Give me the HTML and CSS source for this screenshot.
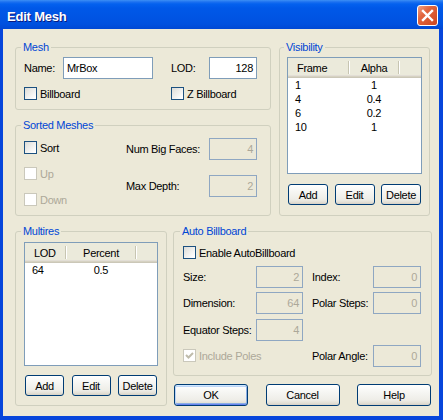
FILE: index.html
```
<!DOCTYPE html>
<html>
<head>
<meta charset="utf-8">
<title>Edit Mesh</title>
<link rel="stylesheet" href="styles.css">
</head>
<body>
<div class="window">
  <div class="titlebar">
    <span class="title">Edit Mesh</span>
    <span class="close"><svg width="19" height="19" viewBox="0 0 19 19"><path d="M5 5 L14 14 M14 5 L5 14" stroke="#fff" stroke-width="2.4" stroke-linecap="square" fill="none"/></svg></span>
  </div>
  <div class="client">
    <div class="row row1">
      <div class="col-left">
        <section class="group mesh">
          <div class="group-title">Mesh</div>
          <div class="mesh-grid">
            <span>Name:</span>
            <div class="edit">MrBox</div>
            <span></span>
            <span>LOD:</span>
            <div class="edit num">128</div>
            <div class="check span-a"><span class="box"></span>Billboard</div>
            <div class="check span-b"><span class="box"></span>Z Billboard</div>
          </div>
        </section>
        <section class="group sorted">
          <div class="group-title">Sorted Meshes</div>
          <div class="sorted-body">
            <div class="sorted-checks">
              <div class="check"><span class="box"></span>Sort</div>
              <div class="check disabled"><span class="box"></span>Up</div>
              <div class="check disabled"><span class="box"></span>Down</div>
            </div>
            <div class="sorted-fields">
              <span>Num Big Faces:</span>
              <div class="edit num disabled">4</div>
              <span>Max Depth:</span>
              <div class="edit num disabled">2</div>
            </div>
          </div>
        </section>
      </div>
      <section class="group visibility">
        <div class="group-title">Visibility</div>
        <div class="list vis-list">
          <div class="list-head">
            <div class="hcell w-frame">Frame</div>
            <div class="hcell w-alpha center">Alpha</div>
          </div>
          <div class="list-row"><div class="cell w-frame first">1</div><div class="cell w-alpha center">1</div></div>
          <div class="list-row"><div class="cell w-frame first">4</div><div class="cell w-alpha center">0.4</div></div>
          <div class="list-row"><div class="cell w-frame first">6</div><div class="cell w-alpha center">0.2</div></div>
          <div class="list-row"><div class="cell w-frame first">10</div><div class="cell w-alpha center">1</div></div>
        </div>
        <div class="list-btns">
          <button class="btn small">Add</button>
          <button class="btn small">Edit</button>
          <button class="btn small">Delete</button>
        </div>
      </section>
    </div>
    <div class="row row2">
      <section class="group multires">
        <div class="group-title">Multires</div>
        <div class="list mr-list">
          <div class="list-head">
            <div class="hcell w-lod">LOD</div>
            <div class="hcell w-pct center">Percent</div>
          </div>
          <div class="list-row"><div class="cell w-lod first">64</div><div class="cell w-pct center">0.5</div></div>
        </div>
        <div class="list-btns">
          <button class="btn small">Add</button>
          <button class="btn small">Edit</button>
          <button class="btn small">Delete</button>
        </div>
      </section>
      <div class="col-right">
        <section class="group auto">
          <div class="group-title">Auto Billboard</div>
          <div class="check enable"><span class="box"></span>Enable AutoBillboard</div>
          <div class="auto-grid">
            <span>Size:</span>
            <div class="edit num disabled">2</div>
            <span></span>
            <span>Index:</span>
            <div class="edit num disabled">0</div>

            <span>Dimension:</span>
            <div class="edit num disabled">64</div>
            <span></span>
            <span>Polar Steps:</span>
            <div class="edit num disabled">0</div>

            <span>Equator Steps:</span>
            <div class="edit num disabled">4</div>
            <span></span>
            <span></span>
            <span></span>

            <div class="check disabled span-poles"><span class="box"><svg width="11" height="11" viewBox="0 0 11 11"><path d="M2 5 L4.5 7.5 L9 3" stroke="#BFBCAB" stroke-width="2" fill="none"/></svg></span>Include Poles</div>
            <span></span>
            <span>Polar Angle:</span>
            <div class="edit num disabled">0</div>
          </div>
        </section>
        <div class="dlg-buttons">
          <button class="btn dlg default">OK</button>
          <button class="btn dlg">Cancel</button>
          <button class="btn dlg">Help</button>
        </div>
      </div>
    </div>
  </div>
</div>
</body>
</html>
```
FILE: styles.css
```
* { box-sizing: border-box; }

body {
  margin: 0;
  background: #ffffff;
  font-family: "Liberation Sans", Arial, sans-serif;
  font-size: 11px;
  letter-spacing: -0.3px;
  color: #000;
}

.window {
  width: 443px;
  height: 420px;
  display: flex;
  flex-direction: column;
  background: #0746DB;
}

.titlebar {
  height: 29px;
  flex: none;
  display: flex;
  justify-content: space-between;
  align-items: flex-start;
  padding: 0 5px 0 7px;
  background: linear-gradient(to bottom, #3D8FF5 0px, #1C70F0 2px, #0461EE 4px, #0058E8 8px, #0055E4 16px, #0051DF 24px, #0048D4 29px);
}

.title {
  margin-top: 10px;
  font-size: 13px;
  line-height: 13px;
  font-weight: bold;
  letter-spacing: -0.2px;
  color: #fff;
  text-shadow: 1px 1px 0 #0A1A7E;
}

.close {
  width: 21px;
  height: 21px;
  margin-top: 5px;
  border: 1px solid #fff;
  border-radius: 3px;
  background: linear-gradient(135deg, #F0A286 0%, #E2663F 35%, #CC4620 100%);
  display: flex;
}

.client {
  flex: 1;
  margin: 0 4px 4px 3px;
  background: #ECE9D8;
  padding: 18px 0 0 12px;
}

.row { display: flex; }
.row1 { gap: 8px; height: 169px; }
.row2 { gap: 6px; margin-top: 15px; align-items: flex-start; }

.col-left {
  width: 256px;
  display: flex;
  flex-direction: column;
  gap: 15px;
}
.col-right {
  width: 259px;
  display: flex;
  flex-direction: column;
}

.group {
  border: 1px solid #D0D0BF;
  border-radius: 3px;
}

.group-title {
  width: max-content;
  height: 13px;
  line-height: 13px;
  margin: -7px 0 0 -3px;
  padding: 0 2px;
  background: #ECE9D8;
  color: #0046D5;
}

/* Mesh */
.mesh { height: 63px; padding-left: 8px; }
.mesh-grid {
  display: grid;
  grid-template-columns: 39px 90px 18px 38px 48px;
  grid-template-rows: 22px 13px;
  row-gap: 8px;
  align-items: center;
  margin-top: 3px;
}
.span-a { grid-column: 1 / 4; }
.span-b { grid-column: 4 / 6; }

/* Sorted */
.sorted { height: 91px; padding-left: 8px; }
.sorted-body { display: flex; }
.sorted-checks {
  width: 102px;
  display: flex;
  flex-direction: column;
  gap: 13px;
  margin-top: 9px;
}
.sorted-fields {
  display: grid;
  grid-template-columns: 83px 48px;
  grid-auto-rows: 22px;
  row-gap: 15px;
  align-items: center;
  margin-top: 6px;
}

/* Edits */
.edit {
  height: 22px;
  border: 1px solid #7F9DB9;
  background: #fff;
  padding: 0 3px;
  line-height: 20px;
  white-space: nowrap;
}
.edit.num { text-align: right; }
.edit.disabled {
  background: #ECE9D8;
  color: #ACA899;
  border-color: #8FA7C2;
}

/* Checkboxes */
.check {
  display: flex;
  align-items: center;
  gap: 3px;
  height: 13px;
  white-space: nowrap;
}
.box {
  flex: none;
  width: 13px;
  height: 13px;
  border: 1px solid #1C5180;
  background: linear-gradient(135deg, #DCDCD7 0%, #FFFFFF 90%);
  display: flex;
}
.check.disabled { color: #ACA899; }
.check.disabled .box {
  border-color: #CAC8BB;
  background: #fff;
}

/* Visibility */
.visibility { width: 151px; padding: 0 7px; }
.list {
  border: 1px solid #7F9DB9;
  background: #fff;
}
.vis-list { height: 117px; margin-top: 3px; }
.list-btns {
  display: flex;
  justify-content: space-between;
  padding: 0 1px;
  margin-top: 10px;
}
.visibility .btn.small { width: 40px; }

.list-head {
  display: flex;
  height: 20px;
  background: #EBEADB;
  box-shadow: inset 0 -1px 0 #CBC7B8, inset 0 -2px 0 #D6D2C2, inset 0 -3px 0 #E2DED6;
}
.hcell {
  position: relative;
  padding: 3px 0 0 9px;
  line-height: 14px;
}
.hcell::after {
  content: "";
  position: absolute;
  right: 0;
  top: 3px;
  width: 1px;
  height: 13px;
  background: #C7C5B2;
  box-shadow: 1px 0 0 #fff;
}
.hcell.center, .cell.center { text-align: center; padding-left: 0; }
.list-row { display: flex; height: 14px; line-height: 14px; }
.cell.first { padding-left: 7px; }

.w-frame { width: 61px; }
.w-alpha { width: 50px; }
.w-lod { width: 41px; }
.w-pct { width: 70px; }

/* Multires */
.multires { width: 152px; height: 175px; padding: 0 8px; }
.mr-list { height: 124px; margin-top: 4px; }
.multires .list-btns { margin-top: 9px; }
.multires .btn.small { width: 39px; }

/* Auto billboard */
.auto { height: 145px; padding: 0 9px; }
.enable { margin-top: 8px; }
.auto-grid {
  display: grid;
  grid-template-columns: 73px 47px 9px 61px 48px;
  grid-template-rows: repeat(4, 22px);
  row-gap: 4.34px;
  align-items: center;
  margin-top: 7px;
}
.span-poles { grid-column: 1 / 3; }

/* Buttons */
.btn {
  font: inherit;
  letter-spacing: inherit;
  color: #000;
  padding: 0;
  border: 1px solid #003C74;
  border-radius: 3px;
  background: linear-gradient(to bottom, #FFFFFF 0%, #F6F6F3 35%, #EEEDE7 75%, #E3E0D6 90%, #D6D0C5 100%);
  height: 21px;
  line-height: 18px;
}
.btn.dlg { width: 74px; height: 22px; }
.dlg-buttons {
  display: flex;
  justify-content: space-between;
  padding: 0 1px;
  margin-top: 8px;
}
.btn.default {
  box-shadow: inset 0 1px 0 #CEE7FF, inset 1px 0 0 #BCD4F6, inset -1px 0 0 #89ADE4, inset 0 -1px 0 #6982EE, inset 0 2px 0 #BCD4F6, inset 0 -2px 0 #89ADE4;
}
```
